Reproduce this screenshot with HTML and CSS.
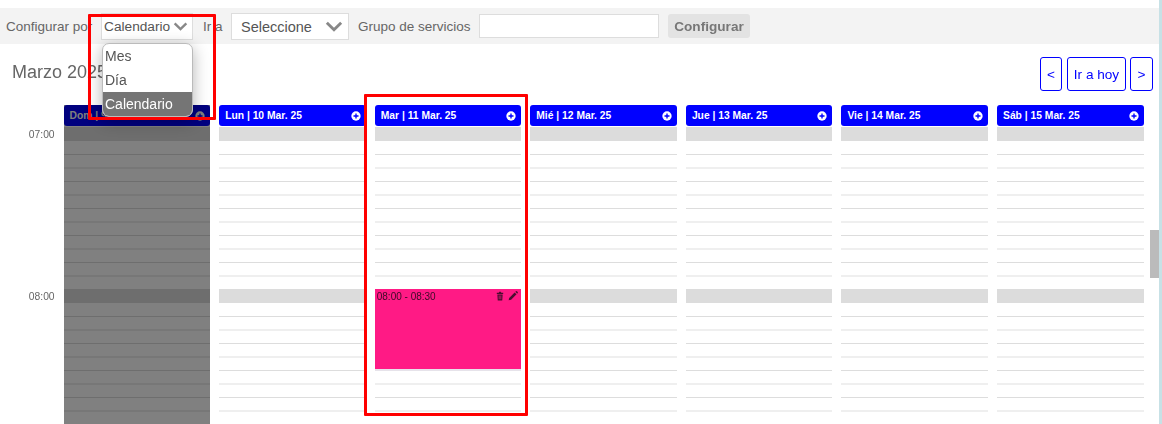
FILE: index.html
```html
<!DOCTYPE html>
<html lang="es">
<head>
<meta charset="utf-8">
<title>Calendario</title>
<link rel="stylesheet" href="styles.css">
</head>
<body>
<div class="page">
  <form class="toolbar">
    <label class="lbl lbl-por">Configurar por</label>
    <div class="fake-select sel-a"><span>Calendario</span><svg class="chev" viewBox="0 0 16 10"><path d="M1.5 1.5 8 8l6.5-6.5" /></svg></div>
    <label class="lbl lbl-ir">Ir a</label>
    <div class="fake-select sel-b"><span>Seleccione</span><svg class="chev" viewBox="0 0 16 10"><path d="M1.5 1.5 8 8l6.5-6.5" /></svg></div>
    <label class="lbl lbl-gr">Grupo de servicios</label>
    <input class="txt" type="text">
    <button class="cfg" type="button">Configurar</button>
  </form>
  <div class="titlebar">
    <h1 class="month">Marzo 2025</h1>
    <div class="nav">
      <a class="nav-btn nb-s">&lt;</a>
      <a class="nav-btn nb-t">Ir a hoy</a>
      <a class="nav-btn nb-s2">&gt;</a>
    </div>
  </div>
  <div class="cal">
    <div class="times">
      <div class="time">07:00</div>
      <div class="time">08:00</div>
    </div>
    <div class="days" id="days"></div>
  </div>
</div>

<ul class="popup">
  <li>Mes</li>
  <li>Día</li>
  <li class="on">Calendario</li>
</ul>
<div class="mark mark-a"></div>
<div class="mark mark-b"></div>
<div class="sb-track"></div>
<div class="sb-thumb"></div>
<script src="app.js"></script>
</body>
</html>
```
FILE: app.js
```js
var names = ["Dom | 9 Mar. 25","Lun | 10 Mar. 25","Mar | 11 Mar. 25","Mié | 12 Mar. 25","Jue | 13 Mar. 25","Vie | 14 Mar. 25","Sáb | 15 Mar. 25"];
var host = document.getElementById("days");
names.forEach(function (n, d) {
  var col = document.createElement("div");
  col.className = "day" + (d === 0 ? " off" : "");
  var html = '<div class="head"><span>' + n + '</span><svg class="plus" viewBox="0 0 12 12"><circle cx="6" cy="6" r="5.6" fill="#fff"/><path d="M6 3v6M3 6h6" stroke="currentColor" stroke-width="1.6"/></svg></div><div class="slots">';
  for (var h = 0; h < 2; h++) {
    for (var i = 0; i < 12; i++) {
      html += '<div class="slot ' + (i === 0 ? "hour" : i % 2 ? "odd" : "even") + '"></div>';
    }
  }
  html += "</div>";
  if (d === 2) {
    html += '<div class="event"><span>08:00 - 08:30</span><span class="ev-ic"><svg class="ic-trash" viewBox="0 0 10 11" preserveAspectRatio="none"><path d="M1 2h8v1.2H1zM3.4 2 4 .7h2L6.6 2zM1.7 3.8h6.6L7.8 10.5H2.2zM3.5 5v4h.8V5zm2.2 0v4h.8V5z" fill-rule="evenodd"/></svg><svg class="ic-pen" viewBox="0 0 11 11"><path d="M.7 10.3 1.3 7.6 7.3 1.6 9.4 3.7 3.4 9.7zM8 .9 8.8.3a.8.8 0 0 1 1 0l.9.9a.8.8 0 0 1 0 1l-.6.8z"/></svg></span></div>';
  }
  col.innerHTML = html;
  host.appendChild(col);
});
```
FILE: styles.css
```css
* { box-sizing: border-box; }
html, body { margin: 0; padding: 0; height: 424px; overflow: hidden; background: #fff; }
body { font-family: "Liberation Sans", Arial, sans-serif; color: #555; position: relative; }
.page { height: 424px; padding-top: 8px; overflow: hidden; opacity: .999; }

.toolbar { display: flex; align-items: center; height: 36px; width: 1159px; background: #f3f3f3; padding-left: 6px; }
.lbl { font-size: 13.5px; color: #666; white-space: nowrap; }
.lbl-por { width: 95px; }
.lbl-ir { width: 28px; }
.lbl-gr { width: 121px; }
.fake-select { display: flex; align-items: center; justify-content: space-between; background: #fff; border: 1px solid #ddd; color: #555; }
.sel-a { width: 92px; height: 27px; font-size: 13.7px; padding: 0 4px 0 2px; margin-right: 10px; }
.sel-b { width: 118px; height: 27px; font-size: 14.5px; padding: 0 5px 0 9px; margin-right: 9px; }
.sel-b span { padding-top: 1px; }
.chev { width: 15px; height: 9px; fill: none; stroke: #888; stroke-width: 2.6; }
.sel-b .chev { width: 18px; height: 11px; }
.txt { width: 180px; height: 24px; border: 1px solid #ddd; background: #fff; margin: 0 9px 0 0; padding: 0; }
.cfg { width: 82px; height: 24px; border: 0; border-radius: 3px; background: #e3e3e3; color: #777; font: bold 13.6px "Liberation Sans", Arial, sans-serif; padding: 0; }

.titlebar { display: flex; justify-content: space-between; align-items: flex-start; height: 61px; padding: 13px 9px 0 12px; }
.month { margin: 5px 0 0; font-size: 18px; line-height: 21px; font-weight: 400; color: #666; }
.nav { display: flex; gap: 4px; }
.nav-btn { display: flex; align-items: center; justify-content: center; height: 34px; border: 1px solid #00f; border-radius: 3px; color: #00f; font-size: 13.6px; }
.nb-s { width: 22px; margin-right: 1px; }
.nb-t { width: 59px; }
.nb-s2 { width: 23px; }

.cal { display: flex; width: 1143.6px; }
.times { width: 63.6px; flex: none; padding-top: 23px; }
.time { height: 162px; padding-right: 9px; text-align: right; font-size: 10.3px; line-height: 13px; color: #666; }
.days { flex: 1; display: grid; grid-template-columns: repeat(7, 1fr); column-gap: 9px; }
.day { position: relative; }
.head { display: flex; align-items: center; justify-content: space-between; height: 21px; margin-bottom: 1px; padding: 0 5px 0 6px; background: #00f; border-radius: 3px; color: #fff; font-size: 10.3px; font-weight: 700; white-space: nowrap; }
.plus { width: 10px; height: 10px; color: #00f; }
.slot { height: 13.5px; }
.hour { background: #dcdcdc; }
.odd { box-shadow: 0 1px 0 #ddd; }
.even { box-shadow: 0 1px 0 #efefef, inset 0 -1px 0 #efefef; }

.off::after { content: ""; position: absolute; inset: 0; background: rgba(0, 0, 0, .5); }

.event { position: absolute; left: 0; right: 0; top: 184px; height: 80px; padding: 2px; background: #ff1a85; color: #3b0a26; font-size: 10px; line-height: 12px; display: flex; justify-content: space-between; box-shadow: 0 2px 0 #e6e3ea; }
.ev-ic { display: flex; gap: 4px; padding-right: 1px; }
.ev-ic svg { height: 10px; fill: #4a0e30; }
.ic-trash { width: 8px; }
.ic-pen { width: 10px; }

.popup { position: absolute; left: 102px; top: 43px; width: 91px; height: 74px; margin: 0; padding: 0; list-style: none; background: #fff; border: 1px solid #bbb; border-radius: 7px; box-shadow: 0 4px 16px rgba(0, 0, 0, .3); font-size: 14px; color: #555; overflow: hidden; opacity: .999; }
.popup li { height: 24px; line-height: 24px; padding-left: 2px; }
.popup .on { background: #757575; color: #fff; }

.mark { position: absolute; border: 3px solid #f00; border-radius: 1px; pointer-events: none; }
.mark-a { left: 88px; top: 14px; width: 128px; height: 106px; }
.mark-b { left: 364px; top: 94px; width: 164px; height: 322px; }

.sb-track { position: absolute; right: 0; top: 0; bottom: 0; width: 3px; background: #c7e1e6; }
.sb-thumb { position: absolute; left: 1150px; top: 230px; width: 9px; height: 48px; background: #bbb; }
```
